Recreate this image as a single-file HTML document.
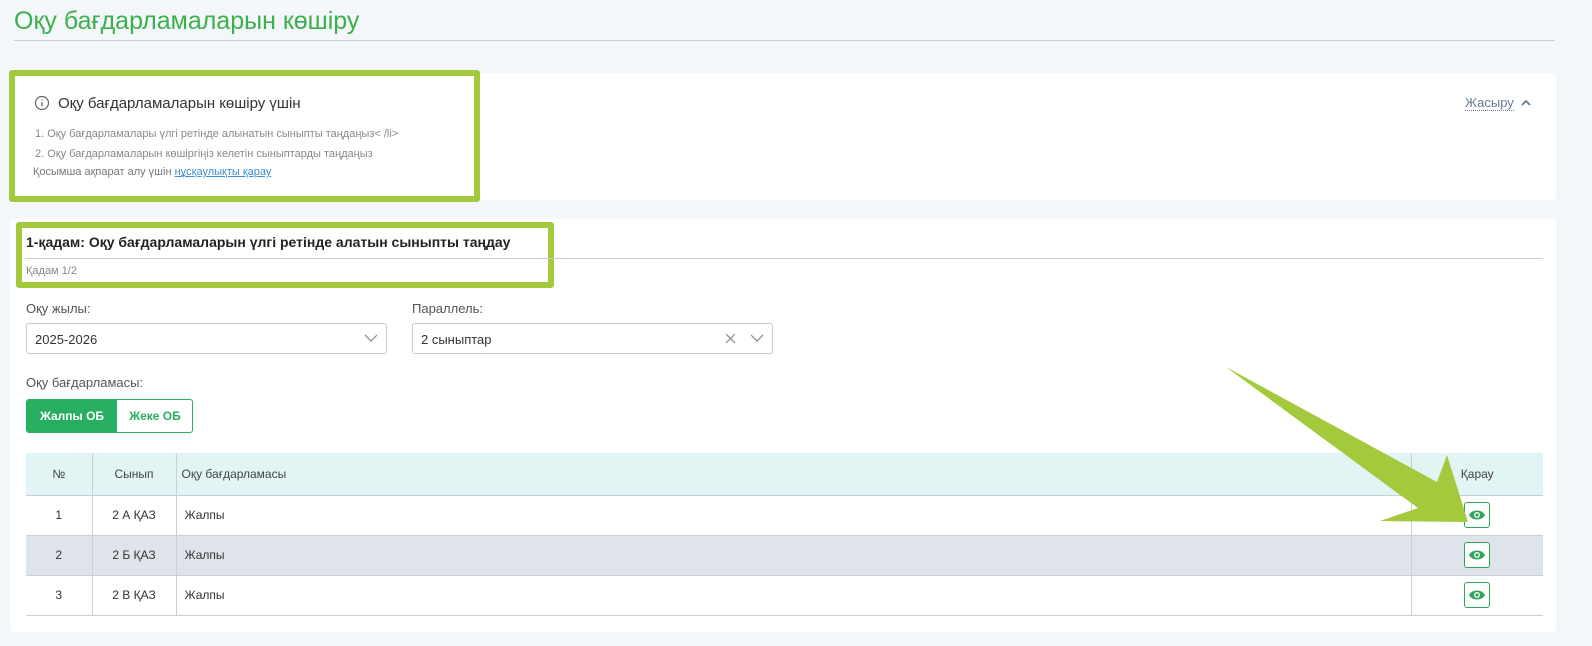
<!DOCTYPE html>
<html><head><meta charset="utf-8"><style>
*{box-sizing:border-box;margin:0;padding:0}
body{width:1592px;height:646px;background:#f4f7fa;font-family:"Liberation Sans",sans-serif;position:relative;overflow:hidden;color:#333}
.abs{position:absolute}
.card{position:absolute;background:#fff;border-radius:4px}
.hl{position:absolute;border:6px solid #a5c93c;border-radius:3px}
.lbl{font-size:13px;color:#555}
.sel{position:absolute;height:31px;border:1px solid #c4cbd6;border-radius:3px;background:#fff;font-size:13px;padding:8px 8px;color:#333}
table{position:absolute;left:26px;top:453px;width:1517px;border-collapse:collapse;font-size:12px}
td,th{border-left:1px solid #c9ced8;height:40px;font-weight:normal}
td:first-child,th:first-child{border-left:none}
th{background:#e3f4f4;height:42px;color:#444}
tr{border-bottom:1px solid #c9ced8}
tr.g td{background:#dfe3ea}
.eye{display:inline-block;width:26px;height:26px;border:1px solid #2fa55a;border-radius:3px;background:#fff;vertical-align:middle;padding-top:6px}
</style></head><body>
<div class="abs" style="left:14px;top:7px;font-size:25px;color:#3bb04c">Оқу бағдарламаларын көшіру</div>
<div class="abs" style="left:14px;top:40px;width:1541px;height:1px;background:#c8ccd3"></div>

<div class="card" style="left:10px;top:73px;width:1546px;height:127px"></div>
<div class="hl" style="left:9px;top:70px;width:471px;height:132px"></div>
<svg class="abs" style="left:34px;top:95px" width="16" height="16" viewBox="0 0 16 16"><circle cx="8" cy="8" r="6.5" fill="none" stroke="#666" stroke-width="1.2"/><path d="M8 7v4.2M8 4.6v1" stroke="#666" stroke-width="1.3"/></svg>
<div class="abs" style="left:58px;top:95px;font-size:15px;color:#333">Оқу бағдарламаларын көшіру үшін</div>
<div class="abs" style="left:35px;top:124px;font-size:11px;color:#888;line-height:20px">1. Оқу бағдарламалары үлгі ретінде алынатын сыныпты таңдаңыз&lt; /li&gt;<br>2. Оқу бағдарламаларын көшіргіңіз келетін сыныптарды таңдаңыз</div>
<div class="abs" style="left:33px;top:166px;font-size:11px;color:#777">Қосымша ақпарат алу үшін <span style="color:#3a8fd8;text-decoration:underline">нұсқаулықты қарау</span></div>
<div class="abs" style="left:1465px;top:95px;font-size:13px;color:#6a7a95;border-bottom:1px dotted #6a7a95">Жасыру</div>
<svg class="abs" style="left:1520px;top:98px" width="12" height="10"><path d="M2 7l4-4 4 4" fill="none" stroke="#6a7a95" stroke-width="1.8"/></svg>

<div class="card" style="left:10px;top:219px;width:1546px;height:413px"></div>
<div class="hl" style="left:16px;top:222px;width:538px;height:66px"></div>
<div class="abs" style="left:26px;top:234px;font-size:14px;font-weight:bold;color:#222">1-қадам: Оқу бағдарламаларын үлгі ретінде алатын сыныпты таңдау</div>
<div class="abs" style="left:25px;top:258px;width:1518px;height:1px;background:#c8ccd8"></div>
<div class="abs" style="left:26px;top:265px;font-size:11px;color:#888">Қадам 1/2</div>

<div class="abs lbl" style="left:26px;top:301px">Оқу жылы:</div>
<div class="sel" style="left:26px;top:323px;width:361px">2025-2026</div>
<svg class="abs" style="left:364px;top:333px" width="14" height="10"><path d="M1 2l6 6 6-6" fill="none" stroke="#888" stroke-width="1.2"/></svg>
<div class="abs lbl" style="left:412px;top:301px">Параллель:</div>
<div class="sel" style="left:412px;top:323px;width:361px">2 сыныптар</div>
<svg class="abs" style="left:725px;top:333px" width="11" height="11"><path d="M1 1l9 9M10 1l-9 9" stroke="#999" stroke-width="1.3"/></svg>
<svg class="abs" style="left:750px;top:333px" width="14" height="10"><path d="M1 2l6 6 6-6" fill="none" stroke="#888" stroke-width="1.2"/></svg>

<div class="abs lbl" style="left:26px;top:375px">Оқу бағдарламасы:</div>
<div class="abs" style="left:26px;top:399px;width:167px;height:34px;border:1px solid #27ae60;border-radius:3px;overflow:hidden;font-size:12px;font-weight:bold">
<div class="abs" style="left:0;top:0;width:90px;height:32px;background:#27ae60;color:#fff;text-align:center;line-height:32px">Жалпы ОБ</div>
<div class="abs" style="left:90px;top:0;width:76px;height:32px;color:#27ae60;text-align:center;line-height:32px">Жеке ОБ</div>
</div>

<table>
<tr><th style="width:66px">№</th><th style="width:84px">Сынып</th><th style="text-align:left;padding-left:5px">Оқу бағдарламасы</th><th style="width:132px">Қарау</th></tr>
<tr><td style="text-align:center">1</td><td style="text-align:center">2 А ҚАЗ</td><td style="padding-left:8px">Жалпы</td><td style="text-align:center"><span class="eye"><svg width="18" height="12" viewBox="0 0 18 12"><path d="M1 6C4 0 14 0 17 6C14 12 4 12 1 6Z" fill="#2fa55a"/><circle cx="9" cy="6" r="3" fill="#fff"/><circle cx="9" cy="6" r="1.6" fill="#2fa55a"/></svg></span></td></tr>
<tr class="g"><td style="text-align:center">2</td><td style="text-align:center">2 Б ҚАЗ</td><td style="padding-left:8px">Жалпы</td><td style="text-align:center"><span class="eye"><svg width="18" height="12" viewBox="0 0 18 12"><path d="M1 6C4 0 14 0 17 6C14 12 4 12 1 6Z" fill="#2fa55a"/><circle cx="9" cy="6" r="3" fill="#fff"/><circle cx="9" cy="6" r="1.6" fill="#2fa55a"/></svg></span></td></tr>
<tr><td style="text-align:center">3</td><td style="text-align:center">2 В ҚАЗ</td><td style="padding-left:8px">Жалпы</td><td style="text-align:center"><span class="eye"><svg width="18" height="12" viewBox="0 0 18 12"><path d="M1 6C4 0 14 0 17 6C14 12 4 12 1 6Z" fill="#2fa55a"/><circle cx="9" cy="6" r="3" fill="#fff"/><circle cx="9" cy="6" r="1.6" fill="#2fa55a"/></svg></span></td></tr>
</table>

<svg class="abs" style="left:0;top:0" width="1592" height="646"><polygon points="1226,367 1437,482 1447,455 1468,522 1380,521 1418,508" fill="#a5c93c"/></svg>
</body></html>
